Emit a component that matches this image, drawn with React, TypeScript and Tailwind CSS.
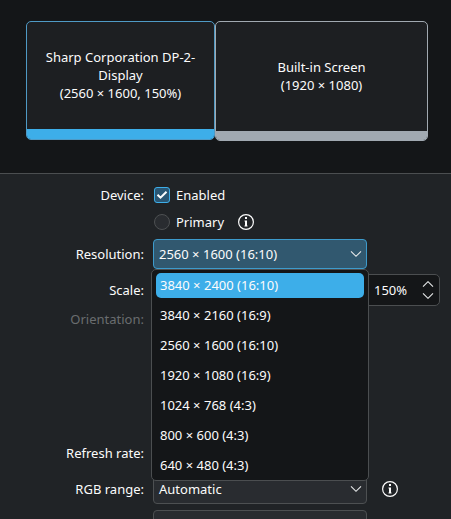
import { useState } from "react";

const RESOLUTIONS = [
  "3840 × 2400 (16:10)",
  "3840 × 2160 (16:9)",
  "2560 × 1600 (16:10)",
  "1920 × 1080 (16:9)",
  "1024 × 768 (4:3)",
  "800 × 600 (4:3)",
  "640 × 480 (4:3)",
];

function InfoIcon() {
  return (
    <svg width="16" height="16" viewBox="0 0 16 16" fill="none">
      <circle cx="8" cy="8" r="7.4" stroke="#fcfcfc" strokeWidth="1.2" />
      <path d="M7 3h2v2H7zM6.5 6.5H9v5h.5v1h-3v-1H7v-4h-.5z" fill="#fcfcfc" />
    </svg>
  );
}

function ChevronDown() {
  return (
    <svg width="12" height="8" viewBox="0 0 12 8" fill="none">
      <path d="M1 1.3l5 5 5-5" stroke="#e6e8e9" strokeWidth="1.1" />
    </svg>
  );
}

function Label({ text, disabled }: { text: string; disabled?: boolean }) {
  return (
    <span
      className={`w-36 shrink-0 text-right ${
        disabled ? "text-[#6a6d6f]" : "text-[#fcfcfc]"
      }`}
    >
      {text}
    </span>
  );
}

export default function App() {
  const [highlighted, setHighlighted] = useState(0);

  return (
    <div className="flex h-[519px] w-[451px] flex-col overflow-hidden bg-[#202326] font-['Noto_Sans','Open_Sans',sans-serif] text-[13px] leading-[18px] text-[#fcfcfc]">
      {/* Screen arrangement */}
      <div className="flex h-[174px] shrink-0 items-start border-b border-[#4b4e50] bg-[#141618] pt-[21px] pl-[26px]">
        <div className="flex h-[119px] w-[189px] flex-col overflow-hidden rounded-[5px] border border-[#4f9ac5] bg-[#1d1f22]">
          <div className="flex flex-1 items-center justify-center pb-[2px] text-center">
            <div>
              Sharp Corporation DP-2-
              <br />
              Display
              <br />
              (2560 × 1600, 150%)
            </div>
          </div>
          <div className="-mx-px -mb-px h-[11px] bg-[#3daee9]" />
        </div>
        <div className="flex h-[120px] w-[213px] flex-col overflow-hidden rounded-[5px] border border-[#a1a9b1] bg-[#1d1f22]">
          <div className="flex flex-1 items-center justify-center pb-[2px] text-center">
            <div>
              Built-in Screen
              <br />
              (1920 × 1080)
            </div>
          </div>
          <div className="-mx-px -mb-px h-[10px] bg-[#a1a9b1]" />
        </div>
      </div>

      {/* Output settings */}
      <div className="flex flex-col pt-[9px]">
        <div className="flex h-6 items-center">
          <Label text="Device:" />
          <div className="ml-[10px] flex size-4 items-center justify-center rounded-[3px] border border-[#3daee9] bg-[#2a5673]">
            <svg width="12" height="10" viewBox="0 0 12 10" fill="none">
              <path d="M1.5 4.7l3 3 6-6" stroke="#fcfcfc" strokeWidth="2" />
            </svg>
          </div>
          <span className="ml-[6px]">Enabled</span>
        </div>

        <div className="mt-[3px] flex h-6 items-center">
          <div className="ml-[154px] size-4 rounded-full border border-[#4d5052] bg-[#292c30]" />
          <span className="ml-[6px] w-[62px]">Primary</span>
          <InfoIcon />
        </div>

        <div className="relative mt-[5px] flex h-[30px] items-center">
          <Label text="Resolution:" />
          <div className="ml-[9px] flex h-[30px] w-[214px] items-center justify-between rounded-[4px] border border-[#3d9bcc] bg-[#31586f] pr-1 pl-[5px]">
            <span>2560 × 1600 (16:10)</span>
            <ChevronDown />
          </div>
          <ul className="absolute top-[30px] left-[151px] z-10 h-[212px] w-[218px] rounded-[5px] border border-[#4b4e50] bg-[#141618] px-1">
            {RESOLUTIONS.map((resolution, i) => (
              <li
                key={resolution}
                className="flex h-[30px] items-center"
                onMouseEnter={() => setHighlighted(i)}
              >
                <span
                  className={`flex h-[25px] w-full items-center rounded-[5px] pl-1 ${
                    i === highlighted ? "bg-[#3daee9]" : ""
                  }`}
                >
                  {resolution}
                </span>
              </li>
            ))}
          </ul>
        </div>

        <div className="mt-[5px] flex h-8 items-center">
          <Label text="Scale:" />
          <div className="ml-[216px] flex h-8 w-20 items-center justify-between rounded-[5px] border border-[#4b4e50] bg-[#141618] pr-[5px] pl-[13px]">
            <span>150%</span>
            <svg width="12" height="18" viewBox="0 0 12 18" fill="none">
              <path
                d="M1 5.7l5-5 5 5M1 12.3l5 5 5-5"
                stroke="#e6e8e9"
                strokeWidth="1.1"
              />
            </svg>
          </div>
        </div>

        <div className="mt-1 flex h-[18px] items-center">
          <Label text="Orientation:" disabled />
        </div>

        <div className="mt-[110px] flex h-[30px] items-center">
          <Label text="Refresh rate:" />
        </div>

        <div className="mt-[6px] flex h-[30px] items-center">
          <Label text="RGB range:" />
          <div className="mr-[15px] ml-[9px] flex h-[30px] w-[214px] items-center justify-between rounded-[4px] border border-[#4d5052] bg-[#292c30] pr-1 pl-[5px]">
            <span>Automatic</span>
            <ChevronDown />
          </div>
          <InfoIcon />
        </div>

        <div className="mt-[6px] ml-[153px] h-[30px] w-[214px] rounded-[4px] border border-[#4d5052] bg-[#292c30]" />
      </div>
    </div>
  );
}
